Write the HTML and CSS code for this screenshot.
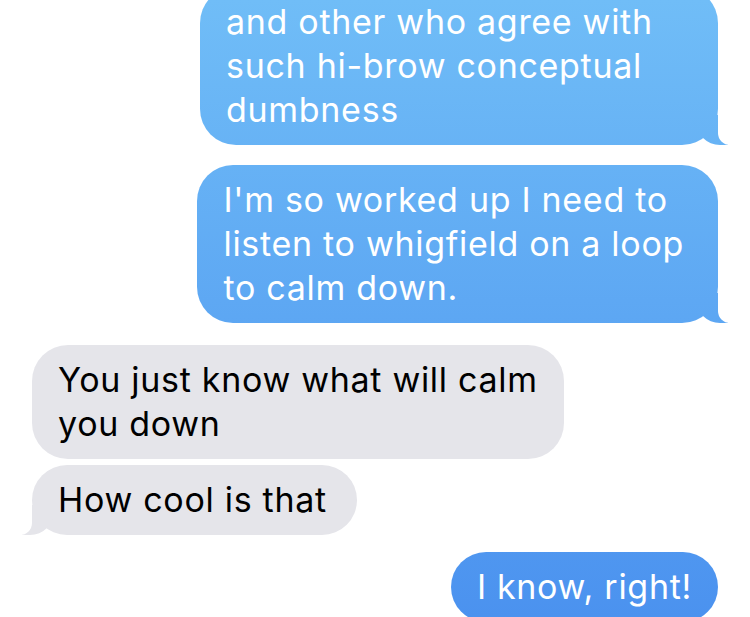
FILE: index.html
```html
<!DOCTYPE html>
<html lang="en">

<head>
    <meta charset="UTF-8">
    <meta name="viewport" content="width=device-width, initial-scale=1.0">
    <title>messages</title>

    <link rel="stylesheet" href="styles.css">
</head>

<body>
    <div class="chat">
        <div class="bubble sent tail full">and other who agree with<br>such hi-brow conceptual<br>dumbness</div>

        <div class="bubble sent tail">I'm so worked up I need to<br>listen to whigfield on a loop<br>to calm down.</div>

        <div class="bubble received first">You just know what will calm<br>you down</div>
        <div class="bubble received tail grouped">How cool is that</div>

        <div class="bubble sent last">I know, right!</div>
    </div>
</body>

</html>
```

FILE: styles.css
```css
* {
    margin: 0;
    padding: 0;
    box-sizing: border-box;
}

body {
    width: 100%;
    height: 617px;
    overflow: hidden;
    background: #fff;
    font-family: Inter, "Noto Sans", sans-serif;
}

.chat {
    display: flex;
    flex-direction: column;
    gap: 20px;
    margin-top: -13px;
    padding: 0 32px;
}

.bubble {
    position: relative;
    padding: 13px 26px;
    border-radius: 36px;
    font-size: 34px;
    line-height: 44px;
    letter-spacing: 0.7px;
    white-space: nowrap;
}

/* blue ones */
.sent {
    align-self: flex-end;
    color: #fff;
    background: linear-gradient(#70bdf7, #4b92ef) fixed;
}

.sent.tail {
    padding-right: 34px;
}

/* top bubble is cut off, its wider lines sit above the screen */
.full {
    width: 518px;
}

.received {
    align-self: flex-start;
    color: #000;
    background: #e5e5ea;
}

.received.tail {
    padding-right: 30px;
}

.first {
    margin-top: 2px;
}

.grouped {
    margin-top: -14px;
}

.last {
    margin-top: -3px;
}

/* tails */
.tail::before,
.tail::after {
    content: "";
    position: absolute;
    bottom: 0;
    height: 30px;
}

.sent.tail::before {
    right: -10px;
    width: 32px;
    background: linear-gradient(#70bdf7, #4b92ef) fixed;
    border-bottom-left-radius: 24px;
}

.sent.tail::after {
    right: -14px;
    width: 14px;
    background: #fff;
    border-bottom-left-radius: 12px;
}

.received.tail::before {
    left: -10px;
    width: 32px;
    background: #e5e5ea;
    border-bottom-right-radius: 24px;
}

.received.tail::after {
    left: -14px;
    width: 14px;
    background: #fff;
    border-bottom-right-radius: 12px;
}
```
